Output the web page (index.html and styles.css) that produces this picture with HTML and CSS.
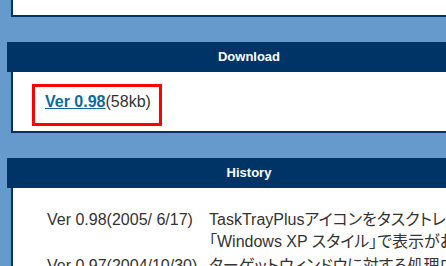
FILE: index.html
```html
<!DOCTYPE html>
<html lang="ja">
<head>
  <meta charset="UTF-8" />
  <title>TaskTrayPlus</title>
  <link rel="stylesheet" href="styles.css">
</head>
<body>
  <div class="page">
    <div class="box box-top"></div>

    <div class="section">
      <h2 class="head">Download</h2>
      <div class="box">
        <div class="mark"><a href="#">Ver 0.98</a>(58kb)</div>
      </div>
    </div>

    <div class="section">
      <h2 class="head">History</h2>
      <div class="box">
        <div class="history">
          <div class="ver">Ver 0.98(2005/ 6/17)</div>
          <div class="note">TaskTrayPlusアイコンをタスクトレイに表示しない設定を追加<br>「Windows XP スタイル」で表示がおかしくなる問題を修正</div>
          <div class="ver">Ver 0.97(2004/10/30)</div>
          <div class="note">ターゲットウィンドウに対する処理ロジックを変更</div>
        </div>
      </div>
    </div>
  </div>
</body>
</html>
```

FILE: styles.css
```css
html, body { margin: 0; overflow: hidden; }
body {
  background: #6699cc;
  font-family: "Liberation Sans", "Noto Sans CJK JP", sans-serif;
  font-size: 16px;
  color: #333;
}
.page { width: 484px; margin-left: 7px; }
.box {
  background: #fff;
  margin-left: 4px;
  border: 2px solid #003366;
  border-top: none;
}
.box-top { height: 15px; }
.section { margin-top: 25px; }
.head {
  margin: 0;
  height: 30px;
  line-height: 30px;
  background: #003366;
  color: #fff;
  font-size: 13px;
  text-align: center;
}
.section .box { padding: 12px 0 5px 19px; }
.mark {
  width: fit-content;
  border: 3px solid #ff0000;
  padding: 6px 8px 12px 10px;
  line-height: 18px;
}
.mark a { color: #0f6a9c; font-weight: bold; }
.history {
  display: grid;
  grid-template-columns: 162px auto;
  row-gap: 2px;
  padding: 9px 0 10px 15px;
  line-height: 22px;
  white-space: nowrap;
}
.note { font-feature-settings: "palt"; }
```
